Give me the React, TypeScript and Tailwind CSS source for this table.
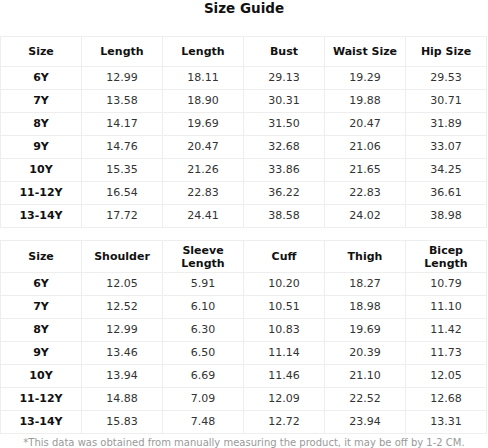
const first = {
  head: ["Size", "Length", "Length", "Bust", "Waist Size", "Hip Size"],
  rows: [
    ["6Y", "12.99", "18.11", "29.13", "19.29", "29.53"],
    ["7Y", "13.58", "18.90", "30.31", "19.88", "30.71"],
    ["8Y", "14.17", "19.69", "31.50", "20.47", "31.89"],
    ["9Y", "14.76", "20.47", "32.68", "21.06", "33.07"],
    ["10Y", "15.35", "21.26", "33.86", "21.65", "34.25"],
    ["11-12Y", "16.54", "22.83", "36.22", "22.83", "36.61"],
    ["13-14Y", "17.72", "24.41", "38.58", "24.02", "38.98"],
  ],
};

const second = {
  head: ["Size", "Shoulder", "Sleeve Length", "Cuff", "Thigh", "Bicep Length"],
  rows: [
    ["6Y", "12.05", "5.91", "10.20", "18.27", "10.79"],
    ["7Y", "12.52", "6.10", "10.51", "18.98", "11.10"],
    ["8Y", "12.99", "6.30", "10.83", "19.69", "11.42"],
    ["9Y", "13.46", "6.50", "11.14", "20.39", "11.73"],
    ["10Y", "13.94", "6.69", "11.46", "21.10", "12.05"],
    ["11-12Y", "14.88", "7.09", "12.09", "22.52", "12.68"],
    ["13-14Y", "15.83", "7.48", "12.72", "23.94", "13.31"],
  ],
};

function SizeTable({ head, rows, headHeight }: { head: string[]; rows: string[][]; headHeight: string }) {
  return (
    <table className="w-[487px] table-fixed border-collapse border border-[#eeeeee] text-center text-[11px]">
      <thead>
        <tr className={headHeight}>
          {head.map((h, i) => (
            <th key={i} className="border border-[#eeeeee] px-1 font-bold leading-[13px] text-[#111]">
              {h}
            </th>
          ))}
        </tr>
      </thead>
      <tbody>
        {rows.map((row) => (
          <tr key={row[0]} className="h-[23px]">
            {row.map((cell, i) => (
              <td
                key={i}
                className={
                  i === 0
                    ? "border border-[#eeeeee] p-0 font-bold text-[#111]"
                    : "border border-[#eeeeee] p-0 text-[#333]"
                }
              >
                {cell}
              </td>
            ))}
          </tr>
        ))}
      </tbody>
    </table>
  );
}

export default function App() {
  return (
    <div className="w-[488px] bg-white font-['DejaVu_Sans',sans-serif]">
      <h1 className="h-[36px] pt-[1px] text-center text-[13.5px] font-bold leading-[14px] text-[#111]">Size Guide</h1>
      <SizeTable head={first.head} rows={first.rows} headHeight="h-[30px]" />
      <div className="mt-3">
        <SizeTable head={second.head} rows={second.rows} headHeight="h-[32px]" />
      </div>
      <p className="mt-[3px] text-center text-[10px] leading-[12px] text-[#999]">
        *This data was obtained from manually measuring the product, it may be off by 1-2 CM.
      </p>
    </div>
  );
}
